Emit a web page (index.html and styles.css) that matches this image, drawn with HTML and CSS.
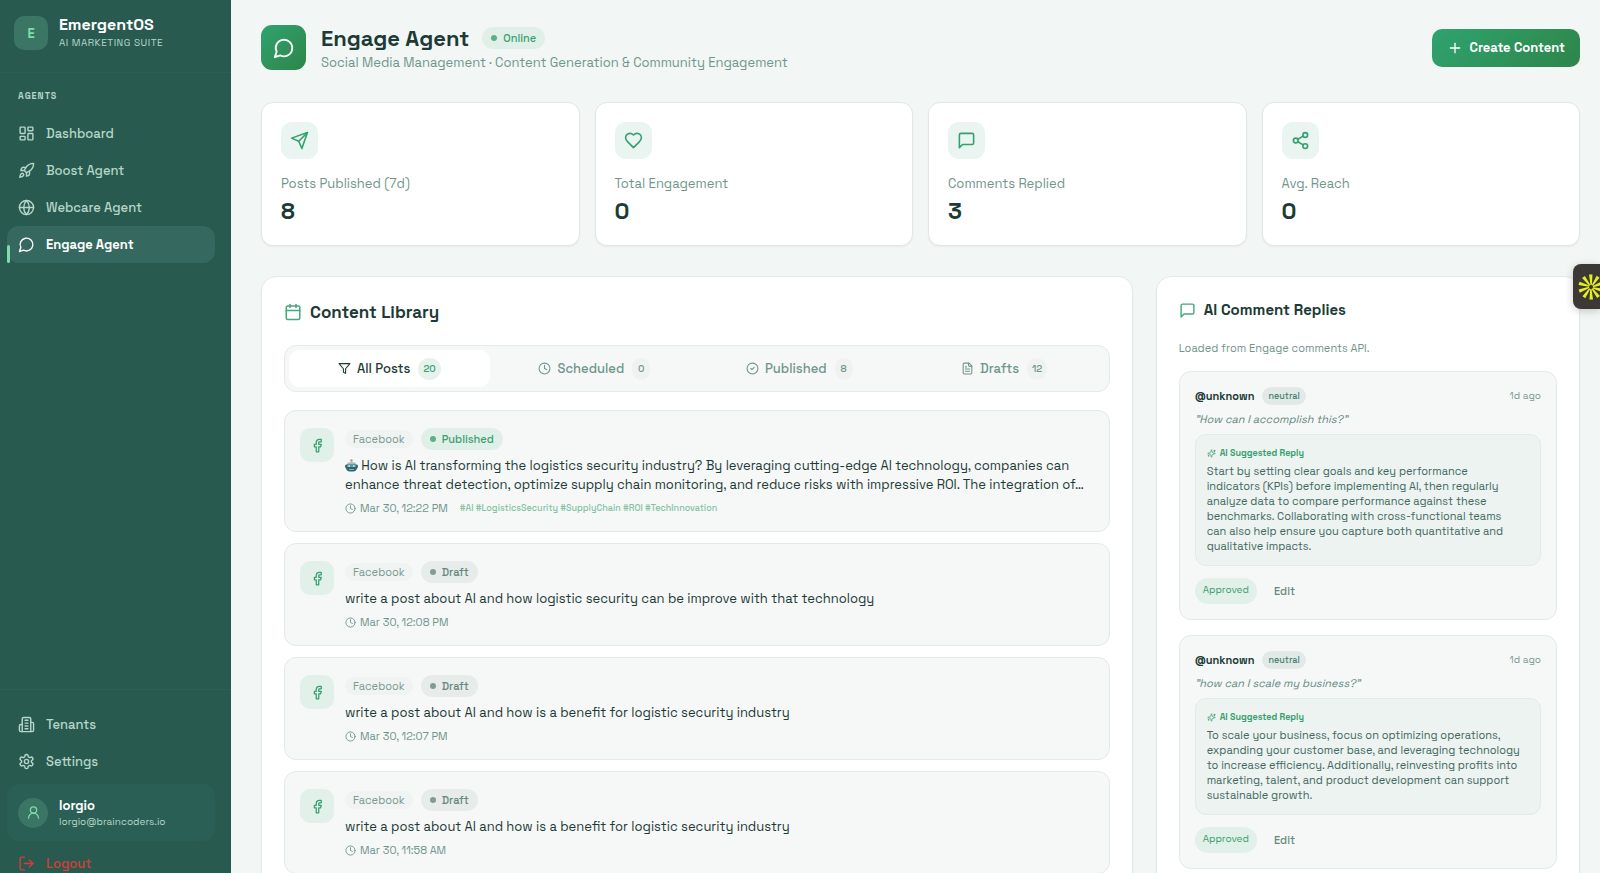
FILE: index.html
```html
<!DOCTYPE html>
<html lang="en">
<head>
  <meta charset="UTF-8" />
  <meta name="viewport" content="width=device-width, initial-scale=1.0"/>
  <title>EmergentOS - Engage Agent</title>
  <link rel="stylesheet" href="styles.css">
</head>
<body>

  <!-- Icon set -->
  <svg class="sprite" aria-hidden="true">
    <symbol id="i-dashboard" viewBox="0 0 24 24"><rect x="3" y="3" width="7" height="9" rx="1"/><rect x="14" y="3" width="7" height="5" rx="1"/><rect x="14" y="12" width="7" height="9" rx="1"/><rect x="3" y="16" width="7" height="5" rx="1"/></symbol>
    <symbol id="i-rocket" viewBox="0 0 24 24"><path d="M4.5 16.5c-1.5 1.26-2 5-2 5s3.74-.5 5-2c.71-.84.7-2.13-.09-2.91a2.18 2.18 0 0 0-2.91-.09z"/><path d="m12 15-3-3a22 22 0 0 1 2-3.95A12.88 12.88 0 0 1 22 2c0 2.72-.78 7.5-6 11a22.35 22.35 0 0 1-4 2z"/><path d="M9 12H4s.55-3.03 2-4c1.62-1.08 5 0 5 0"/><path d="M12 15v5s3.03-.55 4-2c1.08-1.62 0-5 0-5"/></symbol>
    <symbol id="i-globe" viewBox="0 0 24 24"><circle cx="12" cy="12" r="10"/><path d="M12 2a14.5 14.5 0 0 0 0 20 14.5 14.5 0 0 0 0-20"/><path d="M2 12h20"/></symbol>
    <symbol id="i-bubble" viewBox="0 0 24 24"><path d="M7.9 20A9 9 0 1 0 4 16.1L2 22Z"/></symbol>
    <symbol id="i-building" viewBox="0 0 24 24"><path d="M6 22V4a2 2 0 0 1 2-2h8a2 2 0 0 1 2 2v18Z"/><path d="M6 12H4a2 2 0 0 0-2 2v6a2 2 0 0 0 2 2h2"/><path d="M18 9h2a2 2 0 0 1 2 2v9a2 2 0 0 1-2 2h-2"/><path d="M10 6h4"/><path d="M10 10h4"/><path d="M10 14h4"/><path d="M10 18h4"/></symbol>
    <symbol id="i-settings" viewBox="0 0 24 24"><path d="M12.22 2h-.44a2 2 0 0 0-2 2v.18a2 2 0 0 1-1 1.73l-.43.25a2 2 0 0 1-2 0l-.15-.08a2 2 0 0 0-2.73.73l-.22.38a2 2 0 0 0 .73 2.73l.15.1a2 2 0 0 1 1 1.72v.51a2 2 0 0 1-1 1.74l-.15.09a2 2 0 0 0-.73 2.73l.22.38a2 2 0 0 0 2.73.73l.15-.08a2 2 0 0 1 2 0l.43.25a2 2 0 0 1 1 1.73V20a2 2 0 0 0 2 2h.44a2 2 0 0 0 2-2v-.18a2 2 0 0 1 1-1.73l.43-.25a2 2 0 0 1 2 0l.15.08a2 2 0 0 0 2.73-.73l.22-.39a2 2 0 0 0-.73-2.73l-.15-.08a2 2 0 0 1-1-1.74v-.5a2 2 0 0 1 1-1.74l.15-.09a2 2 0 0 0 .73-2.73l-.22-.38a2 2 0 0 0-2.73-.73l-.15.08a2 2 0 0 1-2 0l-.43-.25a2 2 0 0 1-1-1.73V4a2 2 0 0 0-2-2z"/><circle cx="12" cy="12" r="3"/></symbol>
    <symbol id="i-user" viewBox="0 0 24 24"><circle cx="12" cy="8" r="5"/><path d="M20 21a8 8 0 0 0-16 0"/></symbol>
    <symbol id="i-logout" viewBox="0 0 24 24"><path d="M9 21H5a2 2 0 0 1-2-2V5a2 2 0 0 1 2-2h4"/><path d="m16 17 5-5-5-5"/><path d="M21 12H9"/></symbol>
    <symbol id="i-plus" viewBox="0 0 24 24"><path d="M5 12h14"/><path d="M12 5v14"/></symbol>
    <symbol id="i-send" viewBox="0 0 24 24"><path d="m22 2-7 20-4-9-9-4Z"/><path d="M22 2 11 13"/></symbol>
    <symbol id="i-heart" viewBox="0 0 24 24"><path d="M19 14c1.49-1.46 3-3.21 3-5.5A5.5 5.5 0 0 0 16.5 3c-1.76 0-3 .5-4.5 2-1.5-1.5-2.74-2-4.5-2A5.5 5.5 0 0 0 2 8.5c0 2.3 1.5 4.05 3 5.5l7 7Z"/></symbol>
    <symbol id="i-message" viewBox="0 0 24 24"><path d="M21 15a2 2 0 0 1-2 2H7l-4 4V5a2 2 0 0 1 2-2h14a2 2 0 0 1 2 2z"/></symbol>
    <symbol id="i-share" viewBox="0 0 24 24"><circle cx="18" cy="5" r="3"/><circle cx="6" cy="12" r="3"/><circle cx="18" cy="19" r="3"/><path d="m8.59 13.51 6.83 3.98"/><path d="m15.41 6.51-6.82 3.98"/></symbol>
    <symbol id="i-calendar" viewBox="0 0 24 24"><path d="M8 2v4"/><path d="M16 2v4"/><rect x="3" y="4" width="18" height="18" rx="2"/><path d="M3 10h18"/></symbol>
    <symbol id="i-filter" viewBox="0 0 24 24"><path d="M22 3H2l8 9.46V19l4 2v-8.54z"/></symbol>
    <symbol id="i-clock" viewBox="0 0 24 24"><circle cx="12" cy="12" r="10"/><path d="M12 6v6l4 2"/></symbol>
    <symbol id="i-check" viewBox="0 0 24 24"><circle cx="12" cy="12" r="10"/><path d="m9 12 2 2 4-4"/></symbol>
    <symbol id="i-file" viewBox="0 0 24 24"><path d="M15 2H6a2 2 0 0 0-2 2v16a2 2 0 0 0 2 2h12a2 2 0 0 0 2-2V7Z"/><path d="M14 2v4a2 2 0 0 0 2 2h4"/><path d="M10 9H8"/><path d="M16 13H8"/><path d="M16 17H8"/></symbol>
    <symbol id="i-facebook" viewBox="0 0 24 24"><path d="M18 2h-3a5 5 0 0 0-5 5v3H7v4h3v8h4v-8h3l1-4h-4V7a1 1 0 0 1 1-1h3z"/></symbol>
    <symbol id="i-sparkles" viewBox="0 0 24 24"><path d="M9.94 15.5A2 2 0 0 0 8.5 14.06l-6.14-1.58a.5.5 0 0 1 0-.96L8.5 9.94A2 2 0 0 0 9.94 8.5l1.58-6.14a.5.5 0 0 1 .96 0L14.06 8.5a2 2 0 0 0 1.44 1.44l6.14 1.58a.5.5 0 0 1 0 .96l-6.14 1.58a2 2 0 0 0-1.44 1.44l-1.58 6.14a.5.5 0 0 1-.96 0z"/><path d="M20 3v4"/><path d="M22 5h-4"/><path d="M4 17v2"/><path d="M5 18H3"/></symbol>
  </svg>

  <div class="layout">

    <!-- Sidebar -->
    <aside class="sidebar">
      <div class="brand">
        <div class="brand-logo">E</div>
        <div class="brand-text">
          <div class="brand-name">EmergentOS</div>
          <div class="brand-sub">AI MARKETING SUITE</div>
        </div>
      </div>

      <nav class="nav">
        <div class="nav-label">AGENTS</div>
        <a class="nav-item" href="#"><svg class="icon"><use href="#i-dashboard"/></svg>Dashboard</a>
        <a class="nav-item" href="#"><svg class="icon"><use href="#i-rocket"/></svg>Boost Agent</a>
        <a class="nav-item" href="#"><svg class="icon"><use href="#i-globe"/></svg>Webcare Agent</a>
        <a class="nav-item active" href="#"><svg class="icon"><use href="#i-bubble"/></svg>Engage Agent</a>
      </nav>

      <div class="nav-bottom">
        <a class="nav-item" href="#"><svg class="icon"><use href="#i-building"/></svg>Tenants</a>
        <a class="nav-item" href="#"><svg class="icon"><use href="#i-settings"/></svg>Settings</a>
        <div class="user-card">
          <div class="avatar"><svg class="icon"><use href="#i-user"/></svg></div>
          <div>
            <div class="user-name">lorgio</div>
            <div class="user-email">lorgio@braincoders.io</div>
          </div>
        </div>
        <button class="nav-item logout"><svg class="icon"><use href="#i-logout"/></svg>Logout</button>
      </div>
    </aside>

    <main class="main">
      <!-- Page header -->
      <header class="page-header">
        <div class="page-icon"><svg class="icon"><use href="#i-bubble"/></svg></div>
        <div class="page-heading">
          <div class="title-row">
            <h1>Engage Agent</h1>
            <span class="status online">Online</span>
          </div>
          <p>Social Media Management · Content Generation &amp; Community Engagement</p>
        </div>
        <button class="create-btn"><svg class="icon"><use href="#i-plus"/></svg>Create Content</button>
      </header>

      <!-- Stats -->
      <section class="stats">
        <div class="stat">
          <div class="stat-icon"><svg class="icon"><use href="#i-send"/></svg></div>
          <div class="stat-label">Posts Published (7d)</div>
          <div class="stat-value">8</div>
        </div>
        <div class="stat">
          <div class="stat-icon"><svg class="icon"><use href="#i-heart"/></svg></div>
          <div class="stat-label">Total Engagement</div>
          <div class="stat-value">0</div>
        </div>
        <div class="stat">
          <div class="stat-icon"><svg class="icon"><use href="#i-message"/></svg></div>
          <div class="stat-label">Comments Replied</div>
          <div class="stat-value">3</div>
        </div>
        <div class="stat">
          <div class="stat-icon"><svg class="icon"><use href="#i-share"/></svg></div>
          <div class="stat-label">Avg. Reach</div>
          <div class="stat-value">0</div>
        </div>
      </section>

      <div class="columns">
        <!-- Content library -->
        <section class="panel library">
          <h2><svg class="icon"><use href="#i-calendar"/></svg>Content Library</h2>

          <div class="tabs">
            <button class="tab active"><svg class="icon"><use href="#i-filter"/></svg>All Posts<span class="count">20</span></button>
            <button class="tab"><svg class="icon"><use href="#i-clock"/></svg>Scheduled<span class="count">0</span></button>
            <button class="tab"><svg class="icon"><use href="#i-check"/></svg>Published<span class="count">8</span></button>
            <button class="tab"><svg class="icon"><use href="#i-file"/></svg>Drafts<span class="count">12</span></button>
          </div>

          <div class="posts">
            <article class="post">
              <div class="post-icon"><svg class="icon"><use href="#i-facebook"/></svg></div>
              <div class="post-body">
                <div class="post-tags"><span class="network">Facebook</span><span class="status published">Published</span></div>
                <p><svg class="robot" viewBox="0 0 13 13"><circle cx="6.5" cy="1.500" r="1.200" fill="#e0805f"/><path d="M2 5Q2 3 6.500 3T11 5v2H2z" fill="#a3bfc6"/><path d="M1.500 5.500h10q1.500 0 1.500 1.500T12 9.500q-1 3-3.500 3h-4Q2 12.500 1 9.500 0 8.500 0 7t1.500-1.500z" fill="#2f6672"/><path d="M2 5.500h9V8H2z" fill="#5d98a3"/><circle cx="4.200" cy="7" r="1" fill="#c3e4e8"/><circle cx="8.800" cy="7" r="1" fill="#c3e4e8"/><path d="M4 10h5v1H4z" fill="#7fb0b9"/></svg> How is AI transforming the logistics security industry? By leveraging cutting-edge AI technology, companies can enhance threat detection, optimize supply chain monitoring, and reduce risks with impressive ROI. The integration of…</p>
                <div class="post-meta"><svg class="icon"><use href="#i-clock"/></svg><span>Mar 30, 12:22 PM</span><span class="hashtags">#AI #LogisticsSecurity #SupplyChain #ROI #TechInnovation</span></div>
              </div>
            </article>

            <article class="post">
              <div class="post-icon"><svg class="icon"><use href="#i-facebook"/></svg></div>
              <div class="post-body">
                <div class="post-tags"><span class="network">Facebook</span><span class="status draft">Draft</span></div>
                <p>write a post about AI and how logistic security can be improve with that technology</p>
                <div class="post-meta"><svg class="icon"><use href="#i-clock"/></svg><span>Mar 30, 12:08 PM</span></div>
              </div>
            </article>

            <article class="post">
              <div class="post-icon"><svg class="icon"><use href="#i-facebook"/></svg></div>
              <div class="post-body">
                <div class="post-tags"><span class="network">Facebook</span><span class="status draft">Draft</span></div>
                <p>write a post about AI and how is a benefit for logistic security industry</p>
                <div class="post-meta"><svg class="icon"><use href="#i-clock"/></svg><span>Mar 30, 12:07 PM</span></div>
              </div>
            </article>

            <article class="post">
              <div class="post-icon"><svg class="icon"><use href="#i-facebook"/></svg></div>
              <div class="post-body">
                <div class="post-tags"><span class="network">Facebook</span><span class="status draft">Draft</span></div>
                <p>write a post about AI and how is a benefit for logistic security industry</p>
                <div class="post-meta"><svg class="icon"><use href="#i-clock"/></svg><span>Mar 30, 11:58 AM</span></div>
              </div>
            </article>
          </div>
        </section>

        <!-- Comment replies -->
        <section class="panel replies">
          <h3><svg class="icon"><use href="#i-message"/></svg>AI Comment Replies</h3>
          <p class="hint">Loaded from Engage comments API.</p>

          <article class="comment">
            <div class="comment-head"><strong>@unknown</strong><span class="mood">neutral</span><time>1d ago</time></div>
            <p class="quote">"How can I accomplish this?"</p>
            <div class="suggestion">
              <div class="suggestion-label"><svg class="icon"><use href="#i-sparkles"/></svg>AI Suggested Reply</div>
              <p>Start by setting clear goals and key performance indicators (KPIs) before implementing AI, then regularly analyze data to compare performance against these benchmarks. Collaborating with cross-functional teams can also help ensure you capture both quantitative and qualitative impacts.</p>
            </div>
            <div class="comment-actions"><span class="approved">Approved</span><button>Edit</button></div>
          </article>

          <article class="comment">
            <div class="comment-head"><strong>@unknown</strong><span class="mood">neutral</span><time>1d ago</time></div>
            <p class="quote">"how can I scale my business?"</p>
            <div class="suggestion">
              <div class="suggestion-label"><svg class="icon"><use href="#i-sparkles"/></svg>AI Suggested Reply</div>
              <p>To scale your business, focus on optimizing operations, expanding your customer base, and leveraging technology to increase efficiency. Additionally, reinvesting profits into marketing, talent, and product development can support sustainable growth.</p>
            </div>
            <div class="comment-actions"><span class="approved">Approved</span><button>Edit</button></div>
          </article>
        </section>
      </div>
    </main>
  </div>

  <!-- Floating widget -->
  <button class="widget" aria-label="Open widget">
    <svg viewBox="-13 -13 26 26">
      <path id="ray" d="M-.5-2-2-12.500 1.500-12.500.8-2z"/>
      <use href="#ray" transform="rotate(36)"/>
      <use href="#ray" transform="rotate(72)"/>
      <use href="#ray" transform="rotate(108)"/>
      <use href="#ray" transform="rotate(144)"/>
      <use href="#ray" transform="rotate(180)"/>
      <use href="#ray" transform="rotate(216)"/>
      <use href="#ray" transform="rotate(252)"/>
      <use href="#ray" transform="rotate(288)"/>
      <use href="#ray" transform="rotate(324)"/>
    </svg>
  </button>

</body>
</html>
```
FILE: styles.css
```css
* {
  box-sizing: border-box;
}
body {
  margin: 0;
  font-family: 'Space Grotesk', Inter, 'Liberation Sans', sans-serif;
  font-size: 13px;
  background: #f2f6f5;
  color: #1c3a36;
  height: 100vh;
  overflow: hidden;
}
h1, h2, h3, p {
  margin: 0;
}
button {
  font-family: inherit;
  border: none;
  background: none;
  cursor: pointer;
}
.sprite {
  position: absolute;
  width: 0;
  height: 0;
}
.icon {
  width: 17px;
  height: 17px;
  flex: none;
  fill: none;
  stroke: currentColor;
  stroke-width: 2;
  stroke-linecap: round;
  stroke-linejoin: round;
}
.layout {
  display: flex;
  height: 100vh;
}

/* Sidebar */
.sidebar {
  width: 231px;
  flex: none;
  display: flex;
  flex-direction: column;
  justify-content: space-between;
  background: #285a50;
  color: #b5d6c8;
  overflow: hidden;
}
.brand {
  display: flex;
  gap: 11px;
  padding: 14px;
  height: 73px;
  border-bottom: 1px solid #2d6055;
}
.brand-logo {
  width: 34px;
  height: 34px;
  margin-top: 2px;
  border-radius: 10px;
  background: #3b7563;
  color: #7fdcab;
  font-weight: 700;
  display: flex;
  align-items: center;
  justify-content: center;
}
.brand-name {
  font-size: 16px;
  line-height: 21px;
  font-weight: 700;
  color: #fff;
}
.brand-sub {
  font-size: 10px;
  line-height: 16px;
  letter-spacing: 0.5px;
}
.nav {
  flex: 1;
  padding: 15px 16px 0 7px;
}
.nav-label {
  padding-left: 11px;
  margin-bottom: 11px;
  font-size: 9px;
  line-height: 16px;
  font-weight: 600;
  letter-spacing: 1px;
}
.nav-item {
  display: flex;
  align-items: center;
  gap: 11px;
  width: 100%;
  height: 37px;
  padding: 0 11px;
  border-radius: 12px;
  color: #b5d6c8;
  font-size: 13px;
  font-weight: 500;
  text-decoration: none;
}
.nav-item.active {
  position: relative;
  background: #35685f;
  color: #fff;
  font-weight: 600;
}
.nav-item.active::before {
  content: '';
  position: absolute;
  left: 0;
  bottom: 0;
  width: 3px;
  height: 18px;
  border-radius: 2px;
  background: #7fdcab;
}
.nav-bottom {
  padding: 16px 16px 0 7px;
  border-top: 1px solid #2d6055;
  height: 184px;
}
.user-card {
  display: flex;
  align-items: center;
  gap: 11px;
  height: 57px;
  margin: 4px 0;
  padding: 0 11px;
  border-radius: 12px;
  background: #2a5f56;
}
.avatar {
  width: 30px;
  height: 30px;
  border-radius: 50%;
  background: #3b7563;
  color: #7fdcab;
  display: flex;
  align-items: center;
  justify-content: center;
}
.avatar .icon {
  width: 15px;
  height: 15px;
}
.user-name {
  font-weight: 600;
  line-height: 17px;
  color: #fff;
}
.user-email {
  font-size: 10px;
  line-height: 15px;
}
.logout {
  color: #d63c38;
}

/* Main area */
.main {
  flex: 1;
  min-width: 0;
  padding: 25px 20px 0 30px;
}
.page-header {
  display: flex;
  align-items: center;
  gap: 15px;
  height: 45px;
  margin-bottom: 32px;
}
.page-icon {
  width: 45px;
  height: 45px;
  border-radius: 11px;
  background: linear-gradient(135deg, #2fa36f, #2e8549);
  color: #fff;
  display: flex;
  align-items: center;
  justify-content: center;
}
.page-icon .icon {
  width: 22px;
  height: 22px;
}
.page-heading {
  flex: 1;
  padding-top: 3px;
}
.title-row {
  display: flex;
  align-items: center;
  gap: 13px;
}
h1 {
  font-size: 22px;
  line-height: 28px;
}
.page-heading p {
  font-size: 13px;
  line-height: 22px;
  color: #6f968c;
}
.status {
  display: inline-flex;
  align-items: center;
  gap: 6px;
  height: 22px;
  padding: 0 9px;
  border-radius: 11px;
  font-size: 11px;
  font-weight: 500;
}
.status::before {
  content: '';
  width: 6px;
  height: 6px;
  border-radius: 50%;
  background: currentColor;
  opacity: 0.8;
}
.online, .published {
  background: #e1efe9;
  color: #3a9f70;
}
.draft {
  background: #e7ecea;
  color: #66887e;
}
.create-btn {
  display: flex;
  align-items: center;
  gap: 7px;
  height: 38px;
  padding: 0 15px;
  border-radius: 10px;
  background: linear-gradient(135deg, #2fa36f, #2e8549);
  color: #fff;
  font-size: 13px;
  font-weight: 600;
}
.create-btn .icon {
  width: 16px;
  height: 16px;
}

/* Stat cards */
.stats {
  display: grid;
  grid-template-columns: repeat(4, 1fr);
  gap: 15px;
  margin-bottom: 30px;
}
.stat {
  padding: 19px;
  height: 144px;
  background: #fff;
  border: 1px solid #e0e8e5;
  border-radius: 12px;
  box-shadow: 0 1px 2px rgba(28, 58, 54, 0.06);
}
.stat-icon {
  width: 37px;
  height: 37px;
  margin-bottom: 15px;
  border-radius: 11px;
  background: #eaf4f0;
  color: #35a06f;
  display: flex;
  align-items: center;
  justify-content: center;
}
.stat-icon .icon {
  width: 19px;
  height: 19px;
}
.stat-label {
  font-size: 13px;
  line-height: 20px;
  color: #6f968c;
}
.stat-value {
  font-size: 23px;
  line-height: 34px;
  font-weight: 700;
}

/* Panels */
.columns {
  display: grid;
  grid-template-columns: repeat(3, 1fr);
  gap: 23px;
}
.panel {
  padding: 22px;
  background: #fff;
  border: 1px solid #e3eae8;
  border-radius: 15px;
  box-shadow: 0 1px 2px rgba(28, 58, 54, 0.06);
}
.library {
  grid-column: span 2;
}
h2, h3 {
  display: flex;
  align-items: center;
  font-weight: 600;
}
h2 .icon, h3 .icon {
  color: #45a87b;
}
h2 {
  gap: 8px;
  margin-bottom: 20px;
  font-size: 17px;
  line-height: 26px;
}
h2 .icon {
  width: 18px;
  height: 18px;
}
h3 {
  gap: 8px;
  margin-bottom: 19px;
  font-size: 15px;
  line-height: 22px;
}
.tabs {
  display: grid;
  grid-template-columns: repeat(4, 1fr);
  gap: 4px;
  padding: 4px;
  margin-bottom: 18px;
  background: #f6f8f8;
  border: 1px solid #e5ebe9;
  border-radius: 12px;
}
.tab {
  display: flex;
  align-items: center;
  justify-content: center;
  gap: 6px;
  height: 37px;
  padding: 0;
  border-radius: 11px;
  color: #6f968c;
  font-size: 13px;
  font-weight: 500;
}
.tab .icon {
  width: 13px;
  height: 13px;
}
.tab.active {
  background: #fff;
  color: #1c3a36;
}
.count {
  min-width: 18px;
  margin-left: 2px;
  padding: 0 5px;
  border-radius: 11px;
  background: #eff2f1;
  font-size: 10px;
  line-height: 22px;
}
.tab.active .count {
  background: #e7f2ed;
  color: #3a9f70;
}
.posts {
  display: grid;
  gap: 11px;
}
.post {
  display: flex;
  gap: 11px;
  padding: 17px 15px 14px;
  background: #f6f8f8;
  border: 1px solid #e3e9e7;
  border-radius: 12px;
}
.post-icon {
  flex: none;
  width: 34px;
  height: 34px;
  border-radius: 10px;
  background: #e2f0ea;
  color: #35a06f;
  display: flex;
  align-items: center;
  justify-content: center;
}
.post-icon .icon {
  width: 15px;
  height: 15px;
}
.post-body {
  min-width: 0;
}
.post-tags {
  display: flex;
  align-items: center;
  gap: 8px;
  margin-bottom: 6px;
}
.network {
  padding: 0 8px;
  border-radius: 9px;
  background: #eff3f2;
  color: #7b9a92;
  font-size: 11px;
  line-height: 18px;
}
.post p {
  margin-bottom: 6px;
  font-size: 13px;
  line-height: 19px;
}
.robot {
  width: 13px;
  height: 13px;
  vertical-align: -2px;
}
.post-meta {
  display: flex;
  align-items: center;
  gap: 4px;
  font-size: 11px;
  line-height: 17px;
  color: #6f968c;
}
.post-meta .icon {
  width: 11px;
  height: 11px;
}
.hashtags {
  margin-left: 8px;
  font-size: 9px;
  font-weight: 500;
  color: #83c2a4;
}

/* AI comment replies */
.hint {
  margin-bottom: 15px;
  font-size: 11px;
  line-height: 16px;
  color: #6f968c;
}
.comment {
  padding: 15px;
  margin-bottom: 15px;
  background: #f6f8f8;
  border: 1px solid #e3e9e7;
  border-radius: 12px;
}
.comment-head {
  display: flex;
  align-items: center;
  gap: 8px;
  margin-bottom: 6px;
  line-height: 18px;
}
.comment-head strong {
  font-size: 11px;
  font-weight: 600;
}
.mood {
  padding: 0 6px;
  border-radius: 9px;
  background: #e1eae7;
  color: #437f70;
  font-size: 9px;
  font-weight: 500;
}
.comment-head time {
  margin-left: auto;
  font-size: 10px;
  color: #7b9a92;
}
.quote {
  margin-bottom: 7px;
  font-size: 11px;
  line-height: 16px;
  font-style: italic;
  color: #62887f;
}
.suggestion {
  padding: 11px 18px 11px 11px;
  background: #ecf3f1;
  border: 1px solid #e0ece7;
  border-radius: 11px;
}
.suggestion-label {
  display: flex;
  align-items: center;
  gap: 4px;
  margin-bottom: 3px;
  font-size: 9px;
  line-height: 15px;
  font-weight: 600;
  color: #3a9f70;
}
.suggestion-label .icon {
  width: 9px;
  height: 9px;
}
.suggestion p {
  font-size: 11px;
  line-height: 15px;
  color: #436860;
}
.comment-actions {
  display: flex;
  gap: 9px;
  margin-top: 12px;
}
.approved {
  height: 26px;
  padding: 0 8px;
  border-radius: 13px;
  background: #e2f0ea;
  color: #3a9f70;
  font-size: 10px;
  line-height: 24px;
}
.comment-actions button {
  padding: 0 8px;
  color: #66887e;
  font-size: 11px;
  font-weight: 500;
}

/* Floating widget */
.widget {
  position: fixed;
  top: 264px;
  right: 0;
  width: 27px;
  height: 45px;
  padding: 0 0 0 5px;
  border-radius: 8px 0 0 8px;
  background: #3b3836;
  box-shadow: 0 2px 8px rgba(0, 0, 0, 0.2);
  overflow: hidden;
}
.widget svg {
  display: block;
  width: 26px;
  height: 26px;
  fill: #e6ef1e;
}
```
